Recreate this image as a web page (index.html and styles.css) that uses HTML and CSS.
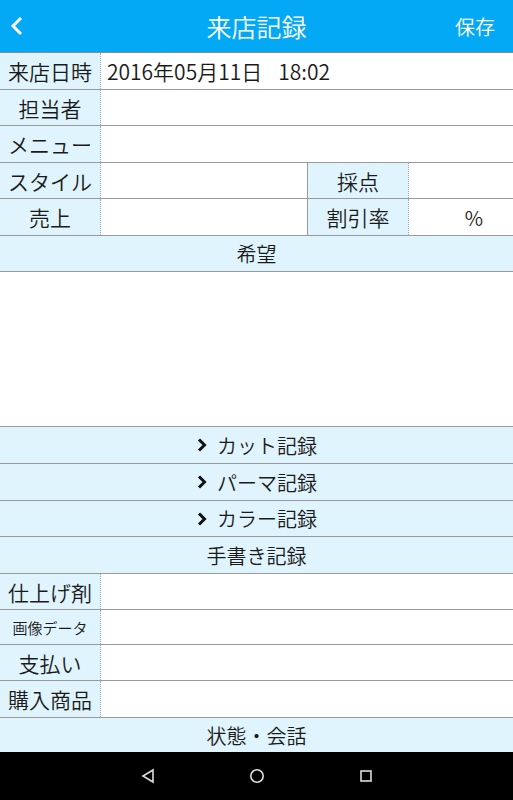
FILE: index.html
```html
<!DOCTYPE html>
<html lang="ja">
<head>
    <meta charset="UTF-8">
    <meta name="viewport" content="width=device-width, initial-scale=1.0">
    <title>来店記録</title>
    <link rel="stylesheet" href="styles.css">
</head>
<body>
    <div class="header">
        <svg class="back" width="14" height="20" viewBox="0 0 14 20"><path d="M11 2 L3 10 L11 18" fill="none" stroke="#fff" stroke-width="3"/></svg>
        <div class="title">来店記録</div>
        <div class="save">保存</div>
    </div>

    <div class="row h37">
        <div class="label">来店日時</div>
        <div class="value date">2016年05月11日<span class="time">18:02</span></div>
    </div>
    <div class="row h36">
        <div class="label">担当者</div>
        <div class="value"></div>
    </div>
    <div class="row h37">
        <div class="label">メニュー</div>
        <div class="value"></div>
    </div>
    <div class="row split h36">
        <div class="label">スタイル</div>
        <div class="value"></div>
        <div class="label sub">採点</div>
        <div class="value"></div>
    </div>
    <div class="row split h37">
        <div class="label">売上</div>
        <div class="value"></div>
        <div class="label sub">割引率</div>
        <div class="value pct">%</div>
    </div>

    <div class="section h36">希望</div>
    <div class="memo"></div>

    <div class="section h37"><svg class="chev" width="12" height="16" viewBox="0 0 12 16"><path d="M3 2.5 L8.5 8 L3 13.5" fill="none" stroke="#111" stroke-width="3"/></svg>カット記録</div>
    <div class="section h37"><svg class="chev" width="12" height="16" viewBox="0 0 12 16"><path d="M3 2.5 L8.5 8 L3 13.5" fill="none" stroke="#111" stroke-width="3"/></svg>パーマ記録</div>
    <div class="section h36"><svg class="chev" width="12" height="16" viewBox="0 0 12 16"><path d="M3 2.5 L8.5 8 L3 13.5" fill="none" stroke="#111" stroke-width="3"/></svg>カラー記録</div>
    <div class="section h37">手書き記録</div>

    <div class="row h36">
        <div class="label">仕上げ剤</div>
        <div class="value"></div>
    </div>
    <div class="row h35">
        <div class="label small">画像データ</div>
        <div class="value"></div>
    </div>
    <div class="row h36">
        <div class="label">支払い</div>
        <div class="value"></div>
    </div>
    <div class="row h37">
        <div class="label">購入商品</div>
        <div class="value"></div>
    </div>
    <div class="section last">状態・会話</div>

    <div class="navbar">
        <svg width="16" height="16" viewBox="0 0 16 16"><path d="M13 2 L3 8 L13 14 Z" fill="none" stroke="#ddd" stroke-width="1.6"/></svg>
        <svg width="16" height="16" viewBox="0 0 16 16"><circle cx="8" cy="8" r="6.2" fill="none" stroke="#ddd" stroke-width="1.6"/></svg>
        <svg width="16" height="16" viewBox="0 0 16 16"><rect x="3" y="3" width="10" height="10" fill="none" stroke="#ddd" stroke-width="1.6"/></svg>
    </div>
</body>
</html>
```

FILE: styles.css
```css
body {
    margin: 0;
    font-family: "Noto Sans CJK JP", "Noto Sans", sans-serif;
    font-weight: 350;
    color: #1a1a1a;
    background: #fff;
}

.header {
    height: 52px;
    background: #03a9f4;
    border-bottom: 1px solid #8a8a8a;
    display: grid;
    grid-template-columns: 1fr auto 1fr;
    align-items: center;
    color: #fff;
}

.back {
    margin-left: 10px;
    width: 14px;
}

.title {
    text-align: center;
    font-size: 25px;
}

.save {
    justify-self: end;
    font-size: 20px;
    margin-right: 18px;
}

.row {
    box-sizing: border-box;
    display: grid;
    grid-template-columns: 101px 1fr;
    border-bottom: 1px solid #9a9a9a;
}

.row.split {
    grid-template-columns: 101px 206px 102px 1fr;
}

.h35 { height: 35px; }
.h36 { height: 36px; }
.h37 { height: 37px; }

.label {
    background: #e0f4fd;
    border-right: 1px dotted #a8a8a8;
    display: flex;
    align-items: center;
    justify-content: center;
    font-size: 21px;
    white-space: nowrap;
}

.label.sub {
    border-left: 1px solid #9a9a9a;
}

.label.small {
    font-size: 15px;
}

.value {
    display: flex;
    align-items: center;
    padding-left: 6px;
    font-size: 20px;
}

.value.date {
    font-size: 21px;
}

.time {
    margin-left: 16px;
}

.value.pct {
    justify-content: center;
    padding-left: 26px;
}

.section {
    box-sizing: border-box;
    background: #e0f4fd;
    border-bottom: 1px solid #9a9a9a;
    display: flex;
    align-items: center;
    justify-content: center;
    font-size: 20px;
}

.section.last {
    height: 34px;
    border-bottom: none;
}

.chev {
    margin-right: 9px;
}

.memo {
    height: 155px;
    box-sizing: border-box;
    border-bottom: 1px solid #9a9a9a;
}

.navbar {
    height: 48px;
    background: #000;
    display: flex;
    align-items: center;
    justify-content: center;
    gap: 93px;
}
```
